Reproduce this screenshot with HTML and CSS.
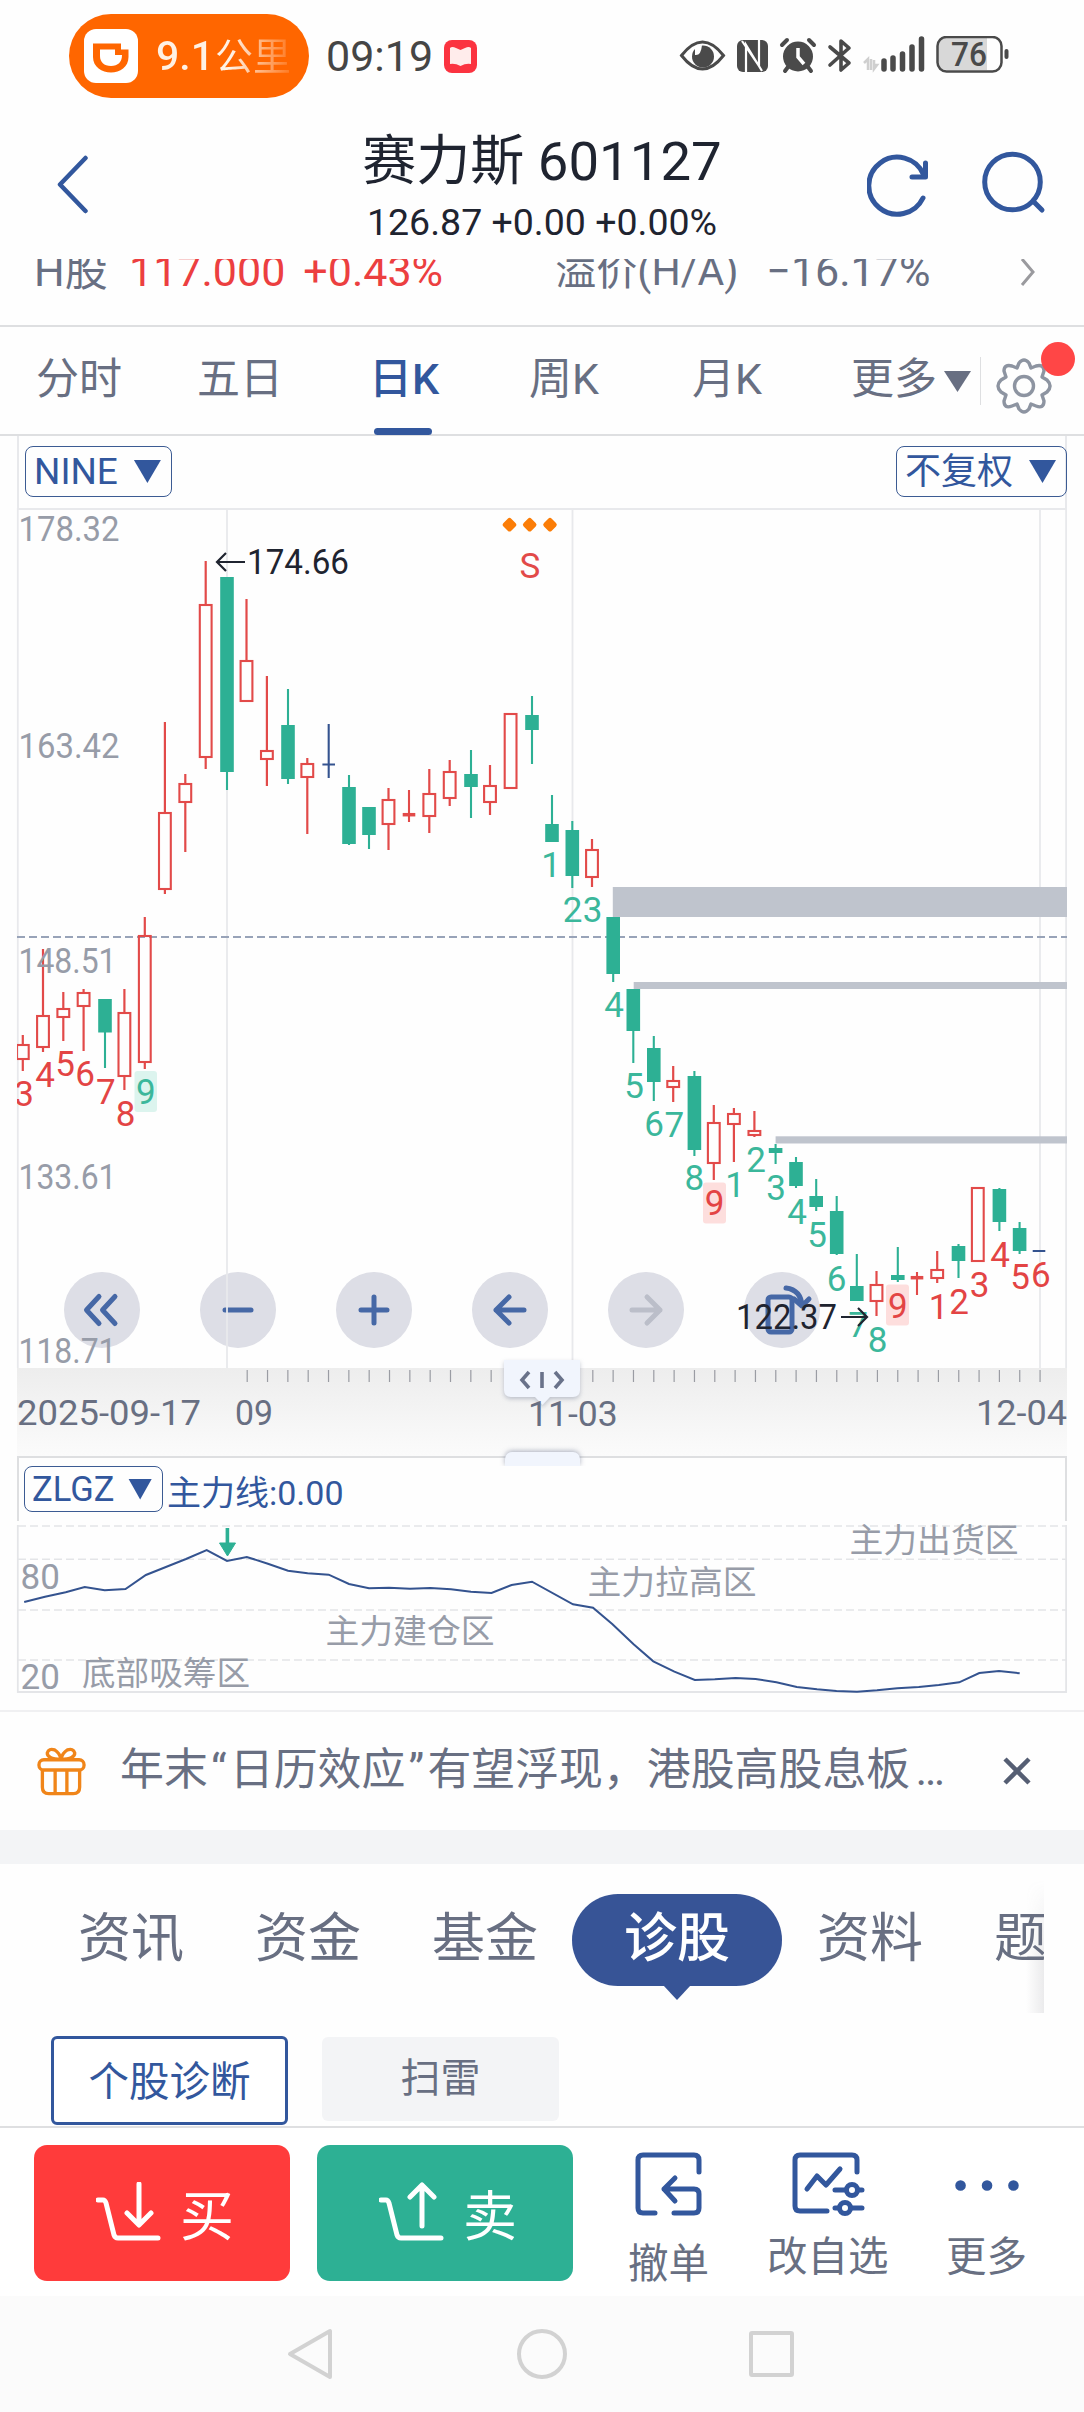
FILE: index.html
```html
<!DOCTYPE html>
<html lang="zh-CN">
<head>
<meta charset="utf-8">
<meta name="viewport" content="width=device-width">
<title>赛力斯 601127</title>
<link rel="stylesheet" href="styles.css">
</head>
<body>
<div class="status">
  <div class="pill">
    <svg class="pill-logo" viewBox="0 0 54 54"><rect width="54" height="54" rx="12" fill="#fff"/><path d="M9 14.500H37V20.500H44.500V28C44.500 38 36 43.500 27 43.500S9 38 9 28Z" fill="#ff6600"/><path d="M16 20.500H31V26H38C38 33 34 37 27 37S16 33 16 27Z" fill="#fff"/></svg>
    <span class="pill-text">9.1<i>公里</i></span>
  </div>
  <span class="clock">09:19</span>
  <svg class="app-badge" viewBox="0 0 33 33"><rect width="33" height="33" rx="8" fill="#fb3340"/><path d="M6 8Q8 6 12 8L16.500 10L21 8Q25 6 27 8V24Q22 23 16.500 26Q11 23 6 24Z" fill="#ffeceb"/></svg>
  <svg class="status-icons" viewBox="0 0 340 40" fill="none" stroke="#4a4a4a">
    <path d="M2.500 19.500Q23.500 -7.500 44.500 19.500Q23.500 46.500 2.500 19.500Z" stroke-width="3"/>
    <circle cx="24" cy="20.500" r="11" fill="#4a4a4a" stroke="none"/><path d="M16 19Q22 20 23 9L16 10Z" fill="#fff" stroke="none"/>
    <rect x="58" y="4" width="31" height="32" rx="6" fill="#4a4a4a" stroke="none"/>
    <path d="M67 36V9L83 35M80 4V30L63 5" stroke="#fff" stroke-width="2.200"/>
    <circle cx="119" cy="20.500" r="15" fill="#4a4a4a" stroke="none"/>
    <path d="M103 9L108 4M130 4L135 9M109 31L106 35M129 31L132 35" stroke-width="4" stroke-linecap="round"/>
    <path d="M119 12V21L125 28" stroke="#fff" stroke-width="3.500"/>
    <path d="M151 11L170 27L162 34V5L170 12L151 29" stroke-width="3.600" stroke-linejoin="round" stroke-linecap="round"/>
    <path d="M185 27L189 23V34M192 23V34M195 24V33L198 29H195" stroke="#cfcfcf" stroke-width="2.500"/>
    <path d="M205 25V33M214 22V33M223.500 18V33M233 11V33M242.500 3V33" stroke-width="5.500" stroke-linecap="round"/>
    <path d="M268 2H308V34H268Q259 34 259 25V11Q259 2 268 2Z" fill="#d8d8d8" stroke="none"/>
    <rect x="258.500" y="1" width="64" height="34.500" rx="9" stroke-width="2.500"/>
    <path d="M327.500 15V21" stroke-width="4" stroke-linecap="round"/>
    <text x="272" y="30" class="battery" textLength="36" lengthAdjust="spacingAndGlyphs">76</text>
  </svg>
</div>

<header class="header">
  <svg class="back" viewBox="0 0 32 60"><path d="M28.500 3L3 29.500L28.500 56" fill="none" stroke="#32579d" stroke-width="4.500" stroke-linecap="round" stroke-linejoin="round"/></svg>
  <div class="heading">
    <h1><span class="name">赛力斯</span> 601127</h1>
    <p>126.87 +0.00 +0.00%</p>
  </div>
  <svg class="actions" viewBox="0 0 180 70" fill="none" stroke="#32579d" stroke-width="5" stroke-linecap="round" stroke-linejoin="round">
    <path d="M56 47A28.500 28.500 0 1 1 56.500 23.500"/><path d="M58.500 12V26H45"/>
    <circle cx="145.500" cy="31" r="27.800"/><path d="M166 50L175 59"/>
  </svg>
</header>

<div class="strip">
  <div class="strip-row">
    <span class="h-label">H股</span><span class="up">117.000</span><span class="up pct">+0.43%</span>
    <span class="premium">溢价(H/A)</span><span>−16.17%</span>
    <svg class="chev" viewBox="0 0 16 28"><path d="M2 1L13 14L2 27" fill="none" stroke="#9a9a9e" stroke-width="3"/></svg>
  </div>
</div>

<nav class="periods">
  <span>分时</span><span>五日</span><span class="active">日K</span><span>周K</span><span>月K</span>
  <span class="more">更多<i class="tri"></i></span>
  <span class="settings">
    <svg viewBox="0 0 60 60" fill="none" stroke="#8d94a1" stroke-width="3.400" stroke-linejoin="round"><path d="M25 7Q30 1 35 7L37 12L42 10Q50 8 50 15L48 21L53 24Q59 30 53 36L48 39L50 45Q50 53 42 50L37 48L35 53Q30 59 25 53L23 48L18 50Q10 53 10 45L12 39L7 36Q1 30 7 24L12 21L10 15Q10 8 18 10L23 12Z"/><circle cx="30" cy="30" r="9.500"/></svg>
    <b class="dot"></b>
  </span>
</nav>

<section class="chart">
  <div class="toolbar">
    <button class="select">NINE<i class="tri"></i></button>
    <button class="select adjust">不复权<i class="tri"></i></button>
  </div>
  <svg id="kline" class="kline" viewBox="0 508 1084 948"></svg>
  <div class="sub-head">
    <button class="select small">ZLGZ<i class="tri"></i></button><span>主力线:0.00</span>
  </div>
  <svg id="sub" class="sub" viewBox="0 1521 1084 189"></svg>

  <div class="float-buttons">
    <button><svg viewBox="-38 -38 76 76"><path d="M-3 -13.500L-15.500 0L-3 13.500M13 -13.500L.5 0L13 13.500"/></svg></button>
    <button><svg viewBox="-38 -38 76 76"><path d="M-13 0H13"/></svg></button>
    <button><svg viewBox="-38 -38 76 76"><path d="M-13 0H13M0 -13V13"/></svg></button>
    <button><svg viewBox="-38 -38 76 76"><path d="M14 0H-14M-1 -13L-14 0L-1 13"/></svg></button>
    <button class="off"><svg viewBox="-38 -38 76 76"><path d="M-14 0H14M1 -13L14 0L1 13"/></svg></button>
    <button><svg viewBox="-38 -38 76 76"><rect x="-14" y="-13" width="24" height="35" rx="3"/><path d="M4 -22Q19 -20 20 -4M12 -11L20 -4L27 -11"/></svg></button>
  </div>
  <div class="handle-top"><svg viewBox="0 0 76 46"><path d="M0 0H76V30Q76 37 69 37H46L38.500 45L31 37H7Q0 37 0 30Z" fill="#f1f5fd"/><path d="M25 12L18 20L25 28M38 12V28M51 12L58 20L51 28" fill="none" stroke="#69728a" stroke-width="3.600"/></svg></div>
  <div class="handle-bottom"></div>
  <span class="date-mid">11-03</span>
</section>

<div class="notice">
  <svg viewBox="0 0 50 50" fill="none" stroke="#f08519" stroke-width="3.400"><path d="M24.500 12.500Q10 12 10.500 6Q12 1 18 3Q23 6 24.500 12.500Q26 6 31 3Q37 1 38.500 6Q39 12 24.500 12.500Z"/><rect x="2" y="13" width="46" height="10.500" rx="5"/><path d="M5.500 23.500V41Q5.500 47.500 12 47.500H37Q43.500 47.500 43.500 41V23.500M18.500 24V47M30.500 24V47"/></svg>
  <p>年末<i>“</i>日历效应<i>”</i>有望浮现，港股高股息板<i class="dots">…</i></p>
  <svg class="close" viewBox="0 0 30 30"><path d="M3 3L27 27M27 3L3 27" stroke="#555e73" stroke-width="4.500"/></svg>
</div>

<nav class="tabs">
  <span>资讯</span><span>资金</span><span>基金</span><span class="active">诊股</span><span>资料</span><span>题</span>
</nav>
<div class="chips"><span class="chip on">个股诊断</span><span class="chip">扫雷</span></div>

<footer class="bar">
  <button class="buy"><svg viewBox="0 0 66 60"><path d="M2 18H7Q9 18 10 21L18 53Q19 56 22 56H62M43 2V40M31 31L43 43L55 31"/></svg>买</button>
  <button class="sell"><svg viewBox="0 0 66 60"><path d="M2 18H7Q9 18 10 21L18 53Q19 56 22 56H62M43 44V3M31 15L43 3L55 15"/></svg>卖</button>
  <div class="tool cancel"><svg viewBox="0 0 74 66"><path d="M64 20V8Q64 3 59 3H8Q3 3 3 8V56Q3 61 8 61H20M39 61H59Q64 61 64 56V42Q64 37 59 37H29M40 26L29 37L40 49"/></svg><span>撤单</span></div>
  <div class="tool edit"><svg viewBox="0 0 74 66"><path d="M65 20V8Q65 3 60 3H8Q3 3 3 8V54Q3 59 8 59H35M15 37L25 24L34 33L48 17M43 38H54M66 38H70M43 56H47M59 56H70"/><circle cx="60" cy="38" r="5.500"/><circle cx="53" cy="56" r="5.500"/></svg><span>改自选</span></div>
  <div class="tool others"><svg viewBox="0 0 74 66"><path d="M10.500 33.500H10.600M37 33.500H37.100M63.400 33.500H63.500" stroke-width="10.500"/></svg><span>更多</span></div>
</footer>
<div class="sysnav">
  <svg viewBox="0 0 520 60" fill="none" stroke="#d2d2d2" stroke-width="4" stroke-linejoin="round"><path d="M49 7V53L9 30Z"/><circle cx="261" cy="30" r="23"/><rect x="470" y="9" width="41" height="42" rx="1"/></svg>
</div>
<script src="chart.js"></script>
</body>
</html>
```
FILE: styles.css
```css
* { box-sizing: border-box; margin: 0; padding: 0; }
body { width: 1084px; height: 2412px; background: #fefefe; color: #686f82; font-family: Roboto, "Noto Sans CJK SC", sans-serif; white-space: nowrap; overflow: hidden; }
button { font: inherit; color: inherit; border: 0; background: none; }
svg { display: block; flex: none; }
i, b { font-style: normal; display: inline-block; }

.status { height: 112px; padding: 14px 0 14px 69px; display: flex; align-items: center; }
.pill { width: 240px; height: 84px; border-radius: 42px; background: #ff6600; display: flex; align-items: center; padding-left: 15px; }
.pill-logo { width: 54px; height: 54px; }
.pill-text { margin-left: 18px; font-size: 41px; line-height: 60px; font-weight: 500; background: linear-gradient(90deg, #fff1e4 75px, rgba(255,241,228,.15) 134px); background-clip: text; -webkit-text-fill-color: transparent; }
.pill-text i { font-size: 38px; font-weight: 400; margin-left: 1px; }
.clock { margin-left: 17px; width: 107px; font-size: 43px; line-height: 60px; color: #454545; }
.pill { flex: none; }
.app-badge { width: 33px; height: 33px; margin-left: 11px; }
.status-icons { width: 340px; height: 40px; margin-left: 202px; }
.battery { font-size: 34px; font-weight: 500; fill: #4a4a4a; stroke: none; }

.header { height: 147px; display: grid; grid-template-columns: 342px 400px 1fr; padding-top: 18px; }
.back { width: 32px; height: 60px; margin: 25px 0 0 57px; }
.heading { text-align: center; color: #1f2430; }
.heading h1 { font-size: 54.500px; line-height: 62px; height: 64px; font-weight: 400; }
.heading .name { font-size: 54px; }
.heading p { font-size: 37.500px; line-height: 56px; }
.actions { width: 180px; height: 70px; margin: 21px 0 0 125px; }

.strip { height: 68px; border-bottom: 2px solid #dedfe1; overflow: hidden; }
.strip-row { height: 60px; margin-top: -18px; display: flex; align-items: center; padding-left: 34px; font-size: 43px; line-height: 60px; }
.strip .up { color: #ec3f40; }
.h-label { width: 95px; }
.strip .pct { margin-left: 18px; width: 252px; }
.premium { width: 211px; font-size: 41px; }
.chev { width: 16px; height: 28px; margin: 2px 48px 0 auto; }

.periods { height: 109px; border-bottom: 2px solid #dedfe1; display: grid; grid-template-columns: 161px 172px 160px 163px 159px 129px 1fr; padding-left: 36px; font-size: 43px; line-height: 104px; }
.periods .active { color: #32579d; font-weight: 500; position: relative; }
.periods .active::after { content: ""; position: absolute; left: 5px; bottom: -1px; width: 58px; height: 7px; border-radius: 3.500px; background: #32579d; }
.tri { width: 27px; height: 23px; background: currentColor; clip-path: polygon(0 0, 100% 0, 50% 100%); }
.more .tri { margin-left: 7px; height: 21px; vertical-align: 2px; }
.settings { position: relative; height: 48px; margin-top: 30px; border-left: 1px solid #dedfe1; }
.settings svg { width: 60px; height: 60px; margin: -1px 0 0 13px; }
.dot { position: absolute; left: 60px; top: -15px; width: 34px; height: 34px; border-radius: 50%; background: #ff4646; }

.chart { position: relative; height: 1274px; }
.toolbar { height: 72px; margin: 0 17px; border: solid #e8e9ec; border-width: 0 2px; display: flex; justify-content: space-between; padding: 10px 0 0 6px; }
.select { height: 51px; border: 1.500px solid #3c5b93; border-radius: 8px; color: #32579d; font-size: 37px; line-height: 50px; display: flex; align-items: center; padding: 0 10px 0 8px; gap: 16px; width: 147px; }
.select.adjust { width: 171px; font-size: 36px; margin-right: -2px; }
.kline { width: 1084px; height: 948px; position: relative; z-index: 1; pointer-events: none; }
.sub-head { height: 65px; margin: 0 17px; border: solid #dedfe1; border-width: 2px 2px 0; display: flex; padding: 8px 0 0 5px; color: #32579d; }
.select.small { width: 139px; height: 46px; font-size: 34.500px; line-height: 44px; gap: 14px; padding-left: 7px; }
.small .tri { width: 24px; height: 21px; }
.sub-head span { font-size: 34px; line-height: 55px; margin-left: 4px; }
.sub { width: 1084px; height: 189px; }
.float-buttons { position: absolute; left: 64px; top: 836px; display: flex; gap: 60px; }
.float-buttons button { width: 76px; height: 76px; border-radius: 50%; background: rgba(188,190,206,.5); }
.float-buttons svg { width: 76px; height: 76px; fill: none; stroke: #4668a6; stroke-width: 5; stroke-linecap: round; stroke-linejoin: round; }
.float-buttons .off svg { stroke: #bbbec9; }
.handle-top { position: absolute; z-index: 2; left: 504px; top: 924px; width: 76px; height: 46px; filter: drop-shadow(0 2px 2px rgba(90,100,130,.35)); }
.handle-bottom { position: absolute; z-index: 2; left: 505px; top: 1016px; width: 75px; height: 14px; border-radius: 7px 7px 0 0; background: #f1f5fd; box-shadow: 0 -1px 5px rgba(90,100,130,.5); clip-path: inset(-8px -8px 0 -8px); }
.date-mid { position: absolute; z-index: 3; left: 528px; top: 960px; font-size: 35.500px; line-height: 36px; color: #686f82; }

.price { font-size: 35px; fill: #979ca8; }
.date { font-size: 35px; fill: #686f82; }
.note { font-size: 35px; fill: #1f2430; }
.count { font-size: 35px; text-anchor: middle; }
.zone { font-size: 33.500px; fill: #979ca8; }

.notice { height: 120px; border-top: 2px solid #f0f0f2; display: flex; align-items: center; padding-left: 37px; }
.notice svg { width: 49px; height: 49px; }
.notice p { font-size: 43.900px; margin-left: 34px; width: 849px; line-height: 58px; height: 60px; }
.notice i { width: 22px; text-align: center; }
.notice .dots { width: 40px; letter-spacing: 0; }
.notice .close { width: 30px; height: 30px; margin-left: 33px; }

.tabs { border-top: 34px solid #f3f4f6; height: 183px; position: relative; padding: 30px 40px 0 78px; display: flex; font-size: 53px; line-height: 91px; overflow: hidden; }
.tabs span { width: 177px; }
.tabs span:nth-child(3) { width: 140px; }
.tabs .active { width: 210px; height: 92px; border-radius: 46px; background: #375496; color: #fff; text-align: center; font-weight: 500; position: relative; margin-right: 35px; }
.tabs .active::after { content: ""; position: absolute; left: 91px; top: 91px; width: 28px; height: 15px; background: #375496; clip-path: polygon(0 0, 100% 0, 50% 100%); }
.tabs span:last-child { width: 50px; overflow: hidden; }
.tabs::after { content: ""; position: absolute; left: 1026px; top: 16px; width: 18px; height: 133px; background: linear-gradient(90deg, rgba(120,120,130,0), rgba(120,120,130,.14)); mask-image: linear-gradient(transparent, #000 60%); }
.chips { height: 115px; padding: 23px 0 0 51px; display: flex; gap: 34px; border-bottom: 2px solid #dedfe1; }
.chip { width: 237px; height: 84px; margin-top: 1px; border-radius: 6px; background: #f3f4f6; font-size: 40px; line-height: 83px; text-align: center; }
.chip.on { height: 89px; margin-top: 0; border: 3px solid #32579d; background: #fff; color: #32579d; line-height: 86px; font-size: 40.500px; }

.bar { height: 168px; display: grid; grid-template-columns: 283px 315px 139px 167px 1fr; padding: 17px 0 0 34px; background: #fff; }
.buy, .sell { width: 256px; height: 136px; border-radius: 13px; background: #ff3b3b; color: #fff; font-size: 54px; display: flex; align-items: center; padding: 0 0 2px 62px; gap: 18px; }
.sell { background: #2db094; }
.buy svg, .sell svg { width: 66px; height: 60px; fill: none; stroke: #fff; stroke-width: 5; stroke-linecap: round; stroke-linejoin: round; }
.tool { padding-top: 7px; width: 120px; margin-left: -4px; font-size: 40.500px; line-height: 60px; }
.tool svg { width: 74px; height: 66px; fill: none; stroke: #32579d; stroke-width: 5; stroke-linecap: round; stroke-linejoin: round; margin-left: 7px; }
.tool span { display: block; margin-top: 9px; }
.tool.cancel span { margin-top: 16px; }
.tool.edit svg { margin-left: 25px; }
.tool.others { margin-left: 8px; }
.tool.others svg { margin-left: 4px; }
.sysnav { height: 116px; background: #fbfbfb; padding: 28px 0 0 281px; }
.sysnav svg { width: 520px; height: 60px; }
```
FILE: chart.js
```js
const RED = '#e24a49', GREEN = '#2db094', BLUE = '#34538f';

// [type, x, high, body top, body bottom, low]
const candles = [
  ['r',22.8,1035,1045,1059,1071],['r',43,949,1016,1047,1052],['r',63.3,992,1009,1017,1041],['r',83.6,989,993,1006,1051],
  ['g',105,999,999,1032.5,1068],['r',124.4,989,1013,1076,1090],['r',144.8,917,936,1062,1069],['r',164.9,722,813,889,894],
  ['r',185.3,774,784,802,852],['r',205.7,561,605,757,769],['g',227,577,577,772,790],['r',246.5,599,661,701,701],
  ['r',266.9,676,751,759,786],['g',288,689,725,779,784],['r',307.3,758,764,777,834],['b',328.7,724,764.5,764.5,778],
  ['g',349,775,787,844,845],['g',369,807,807,835,849],['r',388.5,788,800,824,850],['x',409,790,814.7,814.7,822],
  ['r',429.3,769,794,816,833],['r',449.7,760,772,798,806],['g',471,750,774,787,818],['r',490,765,786,802,815],
  ['r',510.6,714,714,788,789],['g',532,696,715,730,764],['g',552,795,824,842,842],['g',572.3,821,830,876,888],
  ['r',592,839,850,877,887],['g',613.2,917,917,974,982],['g',633.3,989,989,1031,1063],['g',653.8,1036,1048,1082,1101],
  ['r',673.2,1066,1081,1087,1102],['g',694.4,1071,1076,1150,1156],['r',713.8,1105,1123,1163,1180],['r',733.9,1108,1114,1124,1162],
  ['r',754.4,1111,1131,1135,1137],['g',775.6,1144,1148,1153,1164],['g',796,1157,1162,1186,1188],['g',816.2,1179,1196,1207,1211],
  ['g',836.7,1196,1211,1254,1255],['g',856.8,1254,1286,1301,1301],['r',876.5,1271,1285,1301,1316],['g',897.8,1247,1275,1280,1282],
  ['x',917,1272,1277.7,1277.7,1295],['r',937.2,1251,1270,1278,1283],['g',958.5,1244,1246,1261,1278],['r',977.8,1188,1188,1261,1261],
  ['g',999.4,1188,1189,1222,1231],['g',1019.6,1222,1228,1251,1254],['b',1039,1251,1251,1251,1251]
];

// [digit, x, baseline, colour]
const counts = [
  [3,24,1106,'r'],[4,45,1087,'r'],[5,65,1076,'r'],[6,85,1086,'r'],[7,105.8,1104,'r'],[8,125.5,1126,'r'],[9,145.9,1104,'g'],
  [1,551,877,'g'],[2,572.6,922,'g'],[3,592.7,922,'g'],[4,614,1017,'g'],[5,634,1098,'g'],[6,654,1136,'g'],[7,674.3,1137,'g'],
  [8,694.4,1190,'g'],[9,714.5,1215,'r'],[1,735,1197,'g'],[2,756,1172,'g'],[3,776,1200,'g'],[4,797,1224,'g'],[5,817,1247,'g'],
  [6,836.7,1291,'g'],[7,858,1337,'g'],[8,877.6,1352,'g'],[9,897.8,1318,'r'],[1,938.7,1319,'r'],[2,959,1314,'r'],
  [3,979.7,1297,'r'],[4,1000,1267,'r'],[5,1020,1289,'r'],[6,1040.8,1287,'r']
];

const line = (x1, y1, x2, y2, c, w, extra = '') => `<path d="M${x1} ${y1}L${x2} ${y2}" stroke="${c}" stroke-width="${w}" ${extra}/>`;
const rect = (x, y, w, h, c, extra = '') => `<rect x="${x}" y="${y}" width="${w}" height="${h}" fill="${c}" ${extra}/>`;
const text = (s, x, y, cls, len) => `<text x="${x}" y="${y}" class="${cls}" ${len ? `textLength="${len}" lengthAdjust="spacingAndGlyphs"` : ''}>${s}</text>`;

let k = '<defs><linearGradient id="axis" x2="0" y2="1"><stop stop-color="#ededed"/><stop offset="1" stop-color="#fbfbfb"/></linearGradient><clipPath id="plot"><rect x="17" y="508" width="1050" height="948"/></clipPath></defs>';
k += rect(17, 1368, 1050, 88, 'url(#axis)');
k += line(17, 508, 1067, 508, '#e8e9ec', 4);
[17.8, 227, 572.5, 1040, 1066.1].forEach(x => { k += line(x, 508, x, 1368, '#e8e9ec', 1.8); });
for (let i = 0; i < 40; i++) {
  const x = 247.2 + i * 20.33;
  if (x < 503 || x > 582) k += line(x, 1370, x, 1382, '#9a9ca3', 1.2);
}
k += rect(612.8, 887, 454.2, 30, '#bfc4cd') + rect(633.7, 982, 433.3, 7, '#bfc4cd') + rect(775.6, 1136.3, 291.4, 7.2, '#bfc4cd');
k += line(17, 937, 1067, 937, '#98a3b8', 2, 'stroke-dasharray="8 4"');
k += rect(134.5, 1071, 22.5, 41, '#dcf4ee', 'rx="3"') + rect(703, 1182.5, 23, 41, '#fddedd', 'rx="3"') + rect(886, 1284.5, 23, 41, '#fddedd', 'rx="3"');
k += '<g clip-path="url(#plot)">';
for (const [t, x, h, a, b, l] of candles) {
  if (t === 'g') {
    k += line(x, h, x, l, GREEN, 2.1) + rect(x - 6.8, a, 13.6, b - a, GREEN);
  } else if (t === 'r') {
    k += line(x, h, x, a, RED, 2.2) + line(x, b, x, l, RED, 2.2);
    k += `<rect x="${x - 5.9}" y="${a}" width="11.8" height="${b - a}" fill="none" stroke="${RED}" stroke-width="2.1"/>`;
  } else {
    const c = t === 'b' ? BLUE : RED;
    k += line(x, h, x, l, c, 2.1) + line(x - 6.3, a, x + 6.3, a, c, t === 'b' ? 2 : 3.5);
  }
}
for (const [n, x, y, c] of counts) k += `<text x="${x}" y="${y}" class="count" fill="${c === 'r' ? '#e34444' : '#3bb79b'}">${n}</text>`;
k += '</g>';
[['178.32', 541, 101], ['163.42', 758, 101], ['148.51', 973, 98], ['133.61', 1189, 98], ['118.71', 1363, 98]].forEach(([s, y, w]) => { k += text(s, 18.5, y, 'price', w); });
k += `<g fill="none" stroke="#1f2430" stroke-width="2.2"><path d="M245 562H217M226 553L217 562L226 571M841 1317H867M858 1308L867 1317L858 1326"/></g>`;
k += text('174.66', 247, 574, 'note', 102) + text('122.37', 736, 1329, 'note', 101);
[509.5, 529.7, 550].forEach(x => { k += `<rect x="${x - 5.5}" y="519.200" width="11" height="11" rx="2.5" fill="#fb7d07" transform="rotate(45 ${x} 524.7)"/>`; });
k += `<text x="530" y="578" class="count" fill="${RED}">S</text>`;
k += text('2025-09-17', 17, 1425, 'date', 184) + text('09', 235, 1425, 'date', 38) + text('12-04', 976, 1425, 'date', 91);
document.getElementById('kline').innerHTML = k;

const points = '24.2,1602 45,1596.7 65.7,1592.3 84.7,1587 104.7,1590.3 125.5,1589 145.9,1575 165.9,1567 186,1559 206.7,1550 227,1561 246.8,1557 267.9,1563.7 288,1570.7 307.6,1573.3 328.7,1574.7 349,1584 369,1588.3 389,1587.7 410,1588.7 430.4,1588 451,1589.3 471,1591.7 491.5,1593 511.6,1585 532,1581.7 573,1604.3 593,1607.7 612.5,1624.3 633.6,1644.3 653.3,1661.3 674.4,1671.7 694.8,1680 714.8,1679.3 735.6,1678 755.6,1679 776.4,1682.3 796.8,1687 817,1689.3 836.5,1691 857,1691.7 877,1690.3 897.3,1688.3 918.8,1687 938.8,1685 959.2,1682.3 979.3,1673 999,1671 1019.7,1673.3';
let s = '';
[1526, 1559.3, 1610, 1660].forEach(y => { s += line(18, y, 1066, y, '#e4e5e8', 1.6, 'stroke-dasharray="8 4"'); });
s += '<path d="M17.800 1525V1692H1066.100V1525" fill="none" stroke="#e4e5e8" stroke-width="1.800"/>';
s += text('80', 20.5, 1588.7, 'price') + text('20', 20.5, 1688.7, 'price');
s += text('底部吸筹区', 82, 1685, 'zone', 168) + text('主力建仓区', 325.5, 1643, 'zone', 169) + text('主力拉高区', 587.5, 1593.5, 'zone', 169) + text('主力出货区', 849.5, 1551.5, 'zone', 169);
s += `<polyline points="${points}" fill="none" stroke="${BLUE}" stroke-width="2"/>`;
s += line(227.4, 1528, 227.4, 1545, GREEN, 3.6) + `<path d="M219.500 1543H235.500L227.500 1556Z" fill="${GREEN}" stroke="${GREEN}" stroke-linejoin="round"/>`;
document.getElementById('sub').innerHTML = s;
```
